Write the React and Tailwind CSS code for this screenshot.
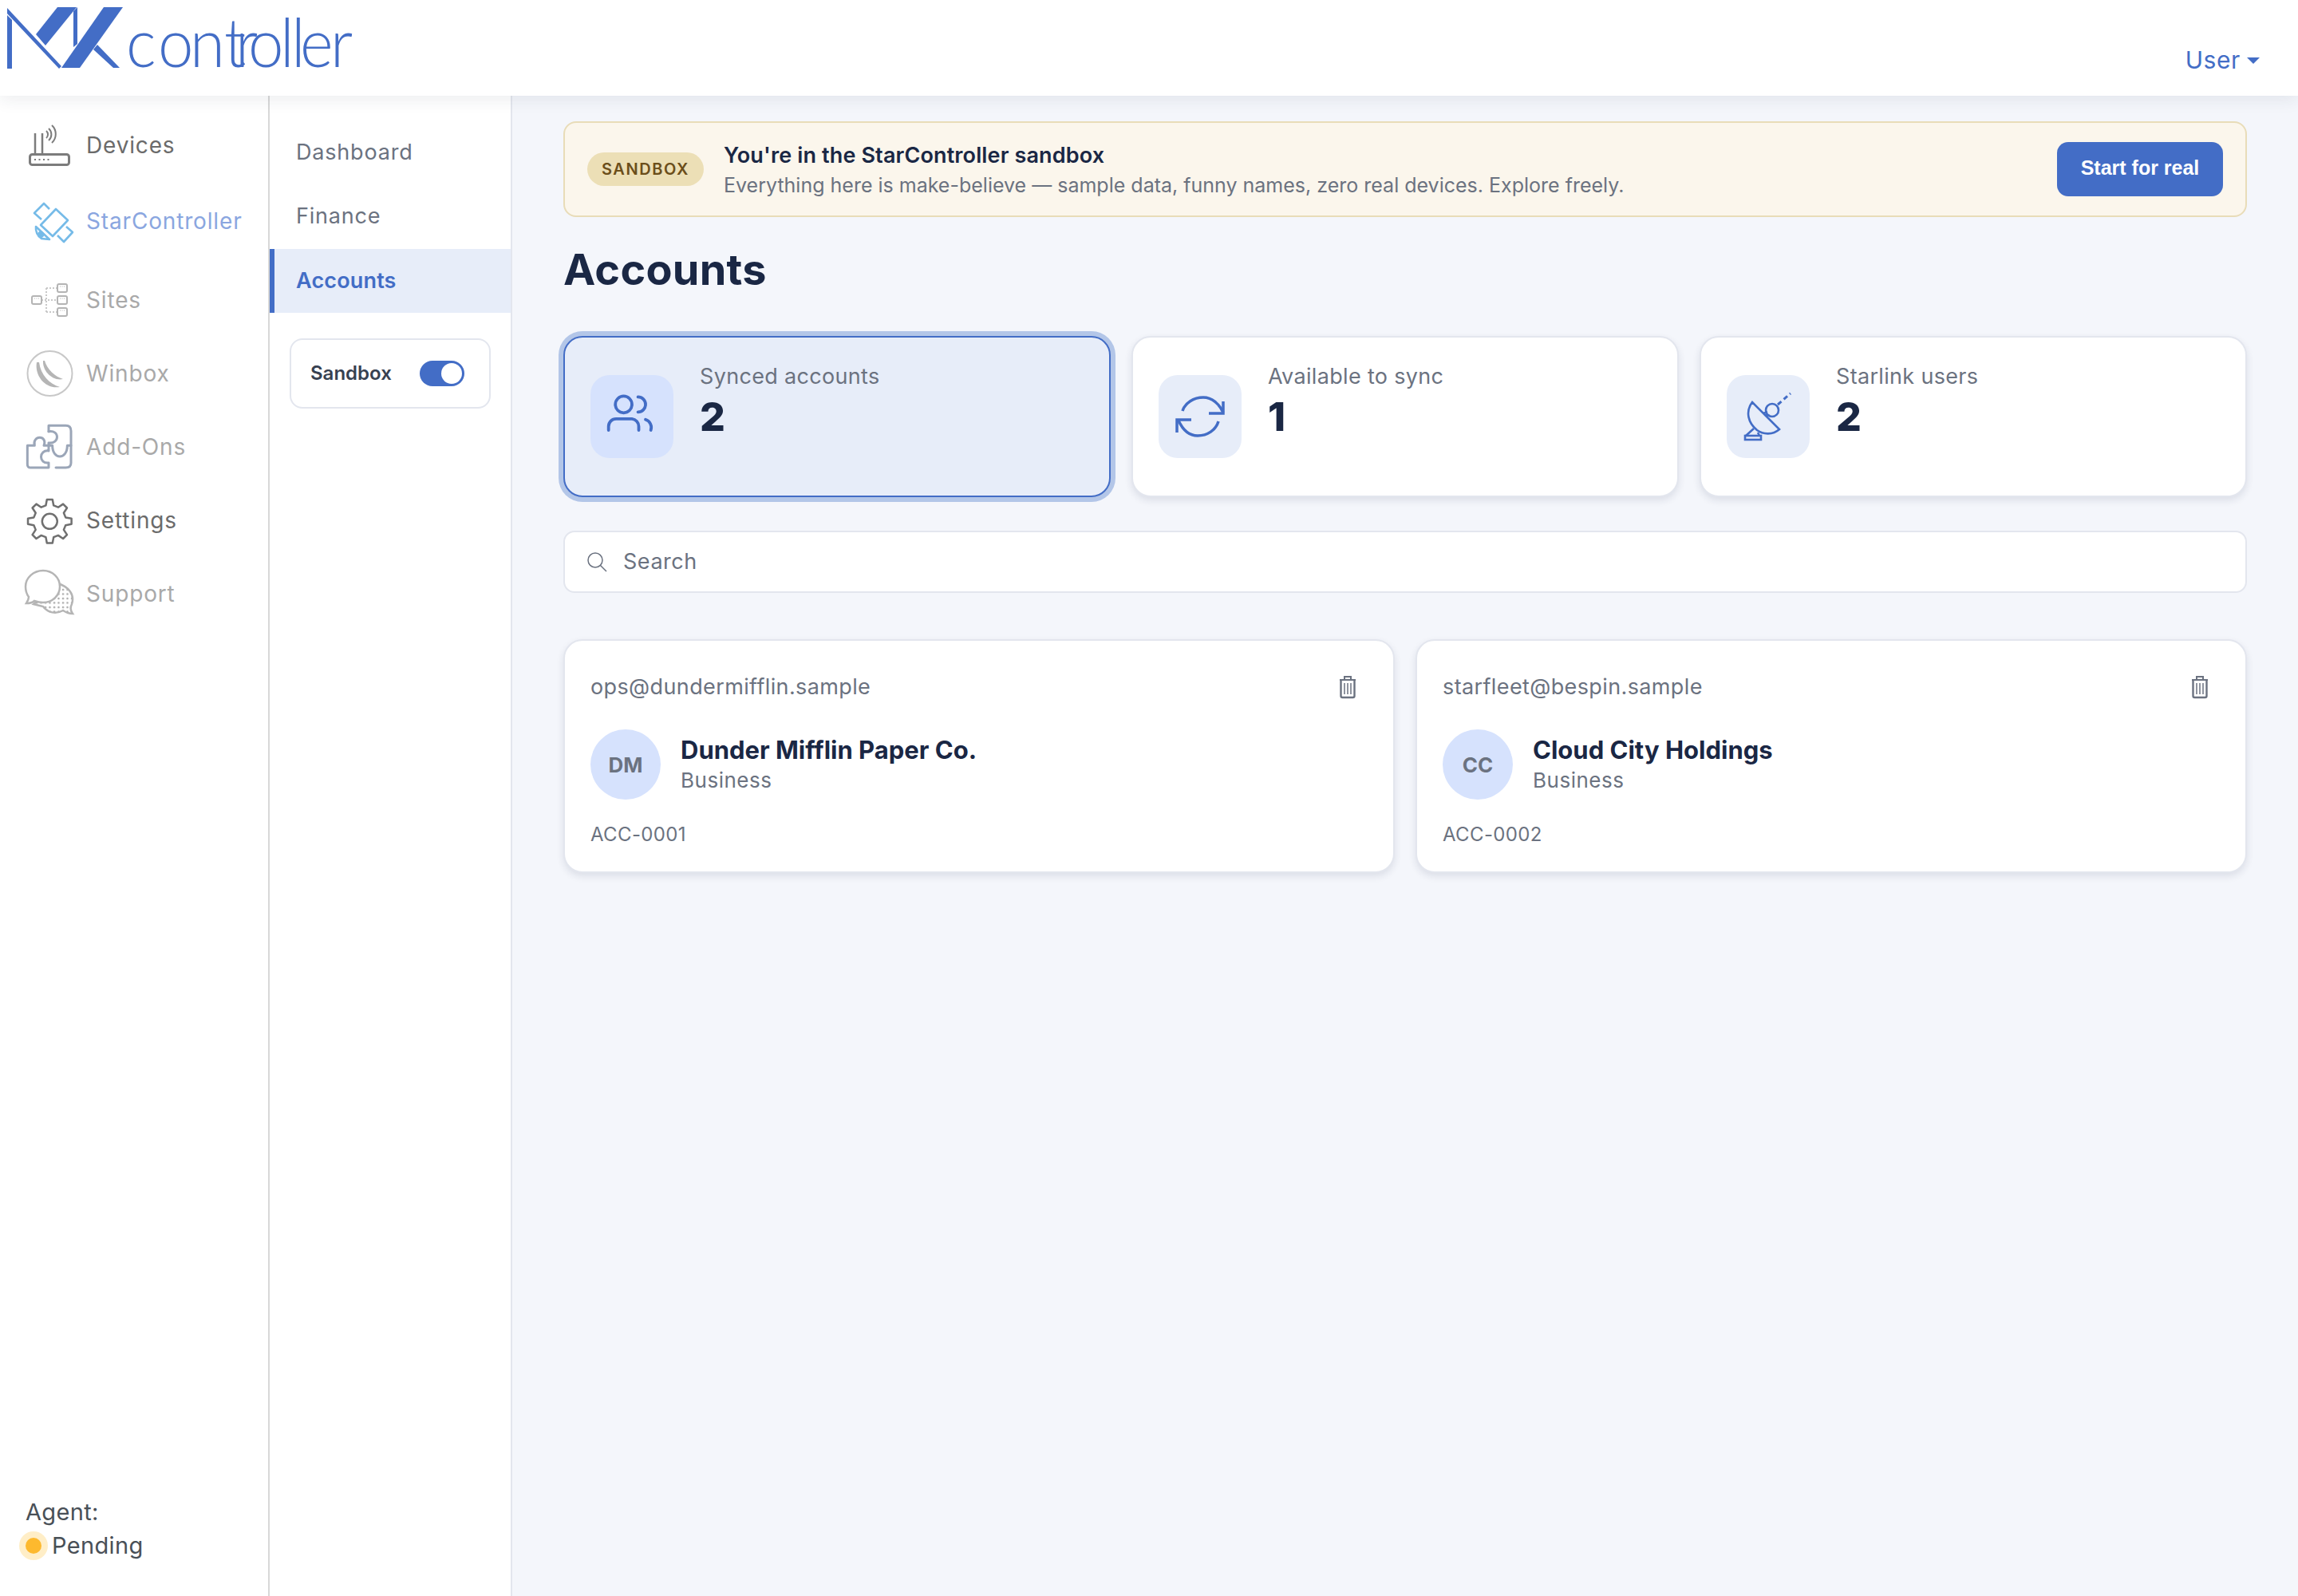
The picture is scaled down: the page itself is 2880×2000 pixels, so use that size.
const BLUE = "#436dc6";

function gearPath(cx, cy, outer, root, teeth) {
  const pts = [];
  const step = (Math.PI * 2) / teeth;
  for (let i = 0; i < teeth; i++) {
    const a = -Math.PI / 2 + i * step;
    [
      [root, -0.5],
      [outer, -0.26],
      [outer, 0.26],
      [root, 0.5],
    ].forEach(([r, o]) => {
      const t = a + o * step * 0.62;
      pts.push(`${(cx + r * Math.cos(t)).toFixed(1)} ${(cy + r * Math.sin(t)).toFixed(1)}`);
    });
  }
  return `M${pts.join("L")}Z`;
}

// x of each logo letter, picked by eye from the reference
const LOGO_X = [158, 198, 238, 281, 295, 311, 351, 365, 376, 414];

function Logo() {
  return (
    <svg width="450" height="100" viewBox="0 0 450 100" fill={BLUE} className="overflow-visible">
      <path d="M9 19L15 25V86H9Z" />
      <path d="M9 10L77 83L74 86L9 17Z" />
      <path d="M72 9H96L57 57L45 43Z" />
      <path d="M92 14L97 9V55L92 59Z" />
      <path d="M130 9H154L100 85H77Z" />
      <path d="M122 56L150 85H142L117 62Z" />
      <text
        transform="scale(0.95 1)"
        x={LOGO_X.map((x) => (x / 0.95).toFixed(1)).join(" ")}
        y="84"
        fontFamily="Lato, sans-serif"
        fontWeight="300"
        fontSize="84"
      >
        controller
      </text>
    </svg>
  );
}

function DevicesIcon() {
  return (
    <svg width="108" height="92" viewBox="0 136 108 92" fill="none" stroke="#7c7c7c" strokeWidth="2.5">
      <rect x="37.5" y="193.5" width="49" height="13" rx="3" strokeWidth="3" />
      <path d="M44 167V193M53 167V193" />
      <path d="M58 164A6 6 0 0 1 58 173M61 161A10 10 0 0 1 61 176M65 157A15 15 0 0 1 65 179" strokeWidth="2" />
      <path d="M43 200H65" strokeDasharray="2 3.5" strokeWidth="2" />
    </svg>
  );
}

function StarIcon() {
  return (
    <svg width="108" height="92" viewBox="0 231 108 92" fill="none" stroke="#76bbe8" strokeWidth="2.6" strokeLinejoin="round">
      <path d="M70 262L85 276L66 296L51 282Z" />
      <path d="M52 275L43 267L55 255L62 262" />
      <path d="M83 284L91 291L80 303L72 295" />
      <path d="M45 284L62 300L52 299Q44 293 45 284Z" />
      <circle cx="51" cy="294" r="3" fill="#76bbe8" />
    </svg>
  );
}

function SitesIcon() {
  return (
    <svg width="108" height="92" viewBox="0 330 108 92" fill="none" stroke="#b4b4b4" strokeWidth="2">
      <path d="M52 376H72M58 361V391M58 361H72M58 391H72" stroke="#c8c8c8" strokeDasharray="2 2" />
      <rect x="40" y="371" width="12" height="10" rx="2" />
      <rect x="72" y="356" width="12" height="10" rx="2" />
      <rect x="72" y="371" width="12" height="10" rx="2" />
      <rect x="72" y="386" width="12" height="10" rx="2" />
      <path d="M43 374H49M75 359H81M75 374H81M75 389H81" strokeWidth="1" strokeDasharray="1 1.5" />
    </svg>
  );
}

function WinboxIcon() {
  return (
    <svg width="108" height="92" viewBox="0 422 108 92" fill="none">
      <circle cx="62.5" cy="468" r="28" stroke="#c8c8c8" strokeWidth="2" />
      <path d="M46 454C43 472 58 488 75 485C62 481 51 470 49 454Z" fill="#b5b5b5" />
      <path d="M54 452C53 465 66 478 79 475C69 472 59 463 56 452Z" fill="#b5b5b5" />
    </svg>
  );
}

function AddOnsIcon() {
  return (
    <svg width="108" height="92" viewBox="0 514 108 92" fill="none">
      <g transform="translate(25 430) scale(0.3333)" stroke="#9ba6b8" strokeWidth="9" strokeLinejoin="round" strokeLinecap="round">
        <path d="M108 332V310H172Q192 310 192 330V450Q192 468 172 468H135" />
        <path d="M108 332C150 325 150 380 108 375V385H122C122 440 178 440 178 385H192" />
        <path d="M28 385H55C45 345 105 345 90 385H108V405C70 400 70 455 108 450V468H40Q28 468 28 455Z" />
      </g>
    </svg>
  );
}

function SettingsIcon() {
  return (
    <svg width="108" height="92" viewBox="0 606 108 92" fill="none" stroke="#707070" strokeWidth="2.5" strokeLinejoin="round">
      <path d={gearPath(62.3, 653.3, 27.5, 20.5, 8)} />
      <circle cx="62.3" cy="653.3" r="9.5" />
    </svg>
  );
}

function SupportIcon() {
  return (
    <svg width="108" height="92" viewBox="0 698 108 92" fill="none" stroke="#b5b5b5" strokeWidth="2.5">
      <defs>
        <pattern id="supportDots" width="5.5" height="5.5" patternUnits="userSpaceOnUse">
          <circle cx="2" cy="2" r="1.2" fill="#a8a8a8" stroke="none" />
        </pattern>
      </defs>
      <path d="M72 731C86 735 94 745 90 757C88 761 88 765 91 769C86 769 82 767 79 765C70 770 60 768 54 760L42 757Z" fill="url(#supportDots)" />
      <path d="M54 715C66 715 75 724 75 735C75 746 66 755 54 755C50 755 46 754 43 753C41 755 37 756 33 756C35 753 36 751 36 748C33 744 32 740 32 735C32 724 42 715 54 715Z" fill="#fff" />
    </svg>
  );
}

const NAV = [
  { label: "Devices", icon: DevicesIcon, color: "text-[#6b6b6b]", extra: "" },
  { label: "StarController", icon: StarIcon, color: "text-[#8aa6e0]", extra: "mt-[3px]" },
  { label: "Sites", icon: SitesIcon, color: "text-[#a9a9a9]", extra: "mt-[7px]" },
  { label: "Winbox", icon: WinboxIcon, color: "text-[#a9a9a9]", extra: "" },
  { label: "Add-Ons", icon: AddOnsIcon, color: "text-[#a9a9a9]", extra: "" },
  { label: "Settings", icon: SettingsIcon, color: "text-[#6b6b6b]", extra: "" },
  { label: "Support", icon: SupportIcon, color: "text-[#a9a9a9]", extra: "" },
];

function UsersIcon() {
  return (
    <svg width="104" height="104" viewBox="0 0 110 110" fill="none" stroke={BLUE} strokeWidth="4" strokeLinecap="round">
      <circle cx="44" cy="39" r="11" />
      <path d="M24 73V68A10 10 0 0 1 34 58H55A10 10 0 0 1 64 68V73" />
      <path d="M63 29A10 10 0 0 1 63 49" />
      <path d="M73 59A11 11 0 0 1 80 73" />
    </svg>
  );
}

function SyncIcon() {
  return (
    <svg width="104" height="104" viewBox="0 0 104 104" fill="none" stroke={BLUE} strokeWidth="3.5">
      <path d="M30 45C33 35 44 28 56 28C67 28 76 36 81 47" />
      <path d="M81 33V48H63" />
      <path d="M75 58C72 69 61 76 49 76C38 76 30 68 25 57" />
      <path d="M23 72V56H41" />
    </svg>
  );
}

function DishIcon() {
  return (
    <svg width="104" height="104" viewBox="2 0 104 104" fill="none" stroke={BLUE} strokeWidth="2.6">
      <path d="M34 34L68 68C60 75 48 75 40 69C29 60 25 46 34 34Z" />
      <circle cx="59" cy="44" r="8" />
      <path d="M48 48L53 46M50 50L56 51" />
      <path d="M66 37L82 23" strokeDasharray="6 4" strokeWidth="3" />
      <path d="M26 76L36 67M43 76L41 72" />
      <rect x="25" y="76" width="20" height="5" />
    </svg>
  );
}

const STATS = [
  { label: "Synced accounts", value: "2", icon: UsersIcon, active: true },
  { label: "Available to sync", value: "1", icon: SyncIcon },
  { label: "Starlink users", value: "2", icon: DishIcon },
];

const ACCOUNTS = [
  { email: "ops@dundermifflin.sample", initials: "DM", name: "Dunder Mifflin Paper Co.", id: "ACC-0001" },
  { email: "starfleet@bespin.sample", initials: "CC", name: "Cloud City Holdings", id: "ACC-0002" },
];

function TrashIcon() {
  return (
    <svg width="24" height="30" viewBox="0 0 24 30" fill="none" stroke="#6b7280" strokeWidth="2">
      <path d="M2 6H22M8 6V2H16V6" />
      <path d="M3.5 6V26Q3.5 28 5.5 28H18.5Q20.5 28 20.5 26V6" strokeWidth="2.4" />
      <path d="M8 10V24M12 10V24M16 10V24" strokeWidth="1.5" />
    </svg>
  );
}

export default function App() {
  return (
    <div className="flex flex-col h-[2000px] bg-white font-['Inter',sans-serif] overflow-hidden">
      <header className="relative z-10 h-[120px] flex justify-between bg-white shadow-[0_4px_20px_rgba(30,40,70,0.09)]">
        <Logo />
        <div className="flex items-center gap-[8px] h-[54px] mt-[48px] pr-[48px] text-[30px] tracking-[0.02em] text-[#436dc6]">
          User
          <span className="mt-[2px] border-x-[8px] border-t-[8px] border-x-transparent border-t-[#436dc6]" />
        </div>
      </header>

      <div className="flex flex-1 min-h-0">
        <aside className="w-[338px] flex flex-col border-r-2 border-[#d8d8d8] pt-[16px]">
          {NAV.map(({ label, icon: Icon, color, extra }) => (
            <div key={label} className={`flex items-center h-[92px] text-[28px] tracking-[0.03em] ${color} ${extra}`}>
              <Icon />
              <span>{label}</span>
            </div>
          ))}
          <div className="mt-auto pb-[42px] text-[29px] leading-[42px] tracking-[0.012em] text-[#495057]">
            <div className="pl-[32px]">Agent:</div>
            <div className="flex items-center pl-[32px]">
              <span className="w-[20px] h-[20px] rounded-full bg-[#fdb92e] shadow-[0_0_0_8px_#ffeec7]" />
              <span className="ml-[13px]">Pending</span>
            </div>
          </div>
        </aside>

        <nav className="w-[304px] flex flex-col border-r-2 border-[#e3e6ee] pt-[31px] text-[27px] tracking-[0.03em] text-[#6b7280]">
          <div className="flex items-center h-[80px] pl-[33px]">Dashboard</div>
          <div className="flex items-center h-[80px] pl-[33px]">Finance</div>
          <div className="flex items-center h-[80px] mt-[1px] pl-[27px] border-l-[6px] border-[#436dc6] bg-[#e7edf9] font-semibold tracking-[0.006em] text-[#436dc6]">
            Accounts
          </div>
          <div className="flex items-center justify-between h-[88px] mt-[32px] mx-[25px] pl-[24px] pr-[31px] border-2 border-[#e3e6ee] rounded-[16px]">
            <span className="text-[24px] font-semibold tracking-normal text-[#374151]">Sandbox</span>
            <span className="flex justify-end items-center w-[56px] h-[32px] pr-[3px] rounded-full bg-[#436dc6]">
              <span className="w-[26px] h-[26px] rounded-full bg-white" />
            </span>
          </div>
        </nav>

        <main className="flex-1 bg-[#f4f6fb] pt-[32px] pl-[64px] pr-[64px]">
          <div className="flex items-center h-[120px] pl-[28px] pr-[28px] border-2 border-[#e8dcb8] rounded-[16px] bg-[#fbf6ec]">
            <span className="flex items-center justify-center w-[146px] h-[42px] rounded-full bg-[#ecdfb6] text-[20px] font-semibold tracking-[0.08em] text-[#6b4e1a]">
              SANDBOX
            </span>
            <div className="flex-1 ml-[25px]">
              <div className="text-[27px] leading-[42px] font-semibold tracking-[0.005em] text-[#1a2744]">
                You're in the StarController sandbox
              </div>
              <div className="-mt-[2px] text-[25px] leading-[36px] text-[#6b7280]">
                Everything here is make-believe — sample data, funny names, zero real devices. Explore freely.
              </div>
            </div>
            <button className="w-[208px] h-[68px] pb-[2px] rounded-[14px] bg-[#436dc6] font-['Liberation_Sans',sans-serif] text-[25px] font-bold text-white">
              Start for real
            </button>
          </div>

          <h1 className="h-[84px] mt-[24px] text-[54px] leading-[84px] font-bold tracking-[0.005em] text-[#1a2744]">Accounts</h1>

          <div className="grid grid-cols-3 gap-[26px] mt-[41px]">
            {STATS.map(({ label, value, icon: Icon, active }) => (
              <div
                key={label}
                className={`flex items-center h-[202px] pl-[32px] border-2 rounded-[24px] ${
                  active
                    ? "border-[#436dc6] bg-[#e7edf9] shadow-[0_0_0_6px_#b3c6e8]"
                    : "border-[#e3e6ee] bg-white shadow-[0_4px_10px_rgba(30,40,70,0.11)]"
                }`}
              >
                <div className={`w-[104px] h-[104px] rounded-[24px] ${active ? "bg-[#d6e2fd]" : "bg-[#e7edf9]"}`}>
                  <Icon />
                </div>
                <div className="ml-[33px] pb-[42px]">
                  <div className="text-[27px] leading-[40px] tracking-[0.012em] text-[#6b7280]">{label}</div>
                  <div className="mt-[2px] text-[50px] leading-[56px] font-extrabold text-[#1a2744]">{value}</div>
                </div>
              </div>
            ))}
          </div>

          <div className="flex items-center h-[78px] mt-[42px] pl-[27px] border-2 border-[#e3e6ee] rounded-[14px] bg-white text-[27px] tracking-[0.02em] text-[#6b7280]">
            <svg width="26" height="26" viewBox="0 0 26 26" fill="none" stroke="#6b7280" strokeWidth="1.5">
              <circle cx="11" cy="11" r="9" />
              <path d="M17.5 17.5L25 25" />
            </svg>
            <span className="ml-[20px]">Search</span>
          </div>

          <div className="grid grid-cols-2 gap-[26px] mt-[58px]">
            {ACCOUNTS.map((a) => (
              <div key={a.id} className="h-[293px] pt-[38px] pl-[32px] pr-[45px] border-2 border-[#e3e6ee] rounded-[24px] bg-white shadow-[0_4px_10px_rgba(30,40,70,0.11)]">
                <div className="flex items-center justify-between h-[40px] text-[27px] tracking-[0.014em] text-[#6b7280]">
                  <span>{a.email}</span>
                  <TrashIcon />
                </div>
                <div className="flex items-center mt-[33px]">
                  <div className="flex items-center justify-center w-[88px] h-[88px] rounded-full bg-[#d6e2fd] text-[26px] font-bold text-[#6b7280]">
                    {a.initials}
                  </div>
                  <div className="ml-[25px]">
                    <div className="text-[31px] leading-[40px] font-bold text-[#1a2744]">{a.name}</div>
                    <div className="text-[26px] leading-[36px] tracking-[0.02em] text-[#6b7280]">Business</div>
                  </div>
                </div>
                <div className="mt-[26px] text-[24px] leading-[36px] tracking-[0.015em] text-[#6b7280]">{a.id}</div>
              </div>
            ))}
          </div>
        </main>
      </div>
    </div>
  );
}
